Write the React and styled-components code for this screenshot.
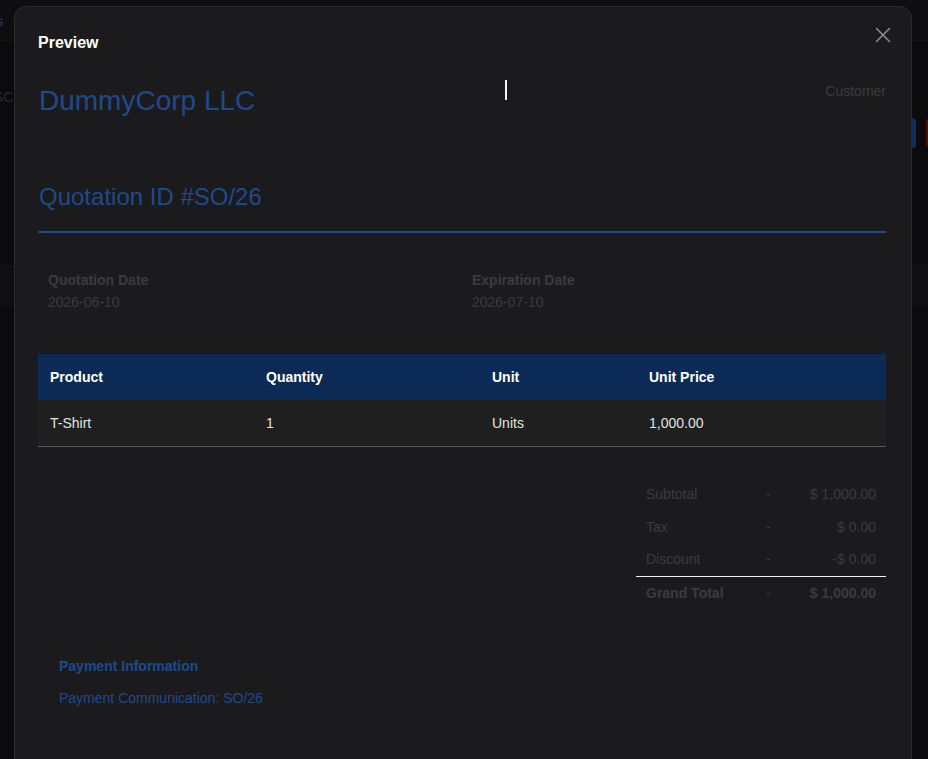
import React from 'react';
import styled, { createGlobalStyle } from 'styled-components';

const GlobalStyle = createGlobalStyle`
  html, body {
    margin: 0;
    padding: 0;
    background: #0b0b0d;
    font-family: "Liberation Sans", Arial, sans-serif;
    overflow: hidden;
  }
`;

const Page = styled.div`
  position: relative;
  width: 100vw;
  height: 100vh;
  background: #0b0b0d;
  overflow: hidden;
`;

// faint page behind the overlay
const BackBar = styled.div`
  height: 40px;
  border-bottom: 1px solid #141416;
  background: #0e0e10;
  display: flex;
  align-items: center;
  color: #1d3f70;
  font-size: 15px;
  margin-left: -4px;
`;

const BackLabel = styled.div`
  color: #2a2a2c;
  font-size: 14px;
  margin: 48px 0 0 -6px;
`;

const BackBand = styled.div`
  margin-top: 160px;
  height: 40px;
  background: #0f0f11;
  border-top: 1px solid #141416;
`;

const BackButtons = styled.div`
  position: absolute;
  top: 118px;
  right: -30px;
  display: flex;
  gap: 10px;
`;

const BackBtn = styled.div`
  width: 32px;
  height: 30px;
  border-radius: 4px;
  background: ${p => p.$red ? '#4a0d0d' : '#0f2e5c'};
`;

const Modal = styled.div`
  position: absolute;
  left: 14px;
  top: 6px;
  width: 898px;
  height: 800px;
  box-sizing: border-box;
  background: #1b1b1d;
  border: 1px solid #2b2b2e;
  border-radius: 12px;
  padding: 25px 25px 0 23px;
`;

const ModalHeader = styled.div`
  display: flex;
  justify-content: space-between;
  align-items: center;
  height: 22px;
`;

const Title = styled.h2`
  margin: 0;
  font-size: 16px;
  font-weight: 700;
  color: #ffffff;
`;

const CloseButton = styled.button`
  background: none;
  border: none;
  padding: 0;
  margin-right: -5px;
  margin-top: -17px;
  width: 16px;
  height: 16px;
  cursor: pointer;
  display: flex;
  svg { display: block; }
`;

const CompanyRow = styled.div`
  display: flex;
  justify-content: space-between;
  align-items: flex-start;
  margin-top: 30px;
`;

const Company = styled.h1`
  margin: 0 0 0 1px;
  font-size: 28px;
  line-height: 34px;
  font-weight: 400;
  color: #1e4a8c;
`;

const Customer = styled.div`
  font-size: 14px;
  color: #3b3b3e;
  margin-top: -1px;
`;

const QuoteTitle = styled.h2`
  margin: 64px 0 0;
  font-size: 24px;
  line-height: 30px;
  font-weight: 400;
  color: #1e4a8c;
  padding: 0 0 19px 1px;
  border-bottom: 2px solid #1e4a8c;
`;

const Dates = styled.div`
  display: grid;
  grid-template-columns: 1fr 1fr;
  margin-top: 38px;
`;

const DateCell = styled.div`
  padding-left: 10px;
`;

const DateLabel = styled.div`
  font-size: 14px;
  font-weight: 700;
  color: #3b3b3e;
  line-height: 18px;
`;

const DateValue = styled.div`
  font-size: 14px;
  color: #3b3b3e;
  line-height: 18px;
  margin-top: 4px;
`;

const Table = styled.table`
  width: 100%;
  table-layout: fixed;
  border-collapse: collapse;
  margin-top: 43px;
  font-size: 14px;
`;

const Th = styled.th`
  background: #0c2a56;
  color: #ffffff;
  font-weight: 700;
  text-align: left;
  height: 46px;
  padding: 0 12px;
  width: ${p => p.$w || 'auto'};
`;

const Td = styled.td`
  background: #1f1f1f;
  color: #e2e2e2;
  height: 46px;
  padding: 0 12px;
  border-bottom: 1px solid #555557;
`;

const Totals = styled.div`
  margin: 31px 0 0 auto;
  width: 250px;
`;

const TotalRow = styled.div`
  display: grid;
  grid-template-columns: 120px 16px 1fr;
  align-items: center;
  padding: 0 10px;
  height: ${p => p.$h || '32.5px'};
  font-size: 14px;
  color: #3b3b3e;
  font-weight: ${p => p.$bold ? 700 : 400};
  border-top: ${p => p.$line ? '1.5px solid #f2f2f2' : 'none'};
`;

const Amount = styled.span`
  text-align: right;
`;

const Payment = styled.div`
  margin-top: 48px;
  padding-left: 21px;
`;

const PaymentTitle = styled.div`
  font-size: 14px;
  font-weight: 700;
  color: #1e4a8c;
`;

const PaymentText = styled.div`
  font-size: 14px;
  color: #1e4a8c;
  margin-top: 16px;
`;

const TextCursor = styled.div`
  position: absolute;
  left: 505px;
  top: 80px;
  width: 2px;
  height: 20px;
  background: #f4f4f4;
`;

const rows = [
  { label: 'Subtotal', value: '$ 1,000.00' },
  { label: 'Tax', value: '$ 0.00' },
  { label: 'Discount', value: '-$ 0.00' },
];

export default function App() {
  return (
    <>
      <GlobalStyle />
      <Page>
        <BackBar>s</BackBar>
        <BackLabel>SC</BackLabel>
        <BackBand />
        <BackButtons>
          <BackBtn />
          <BackBtn $red />
        </BackButtons>

        <Modal>
          <ModalHeader>
            <Title>Preview</Title>
            <CloseButton aria-label="Close">
              <svg width="16" height="16" viewBox="0 0 16 16" fill="none">
                <path d="M1.5 1.5 L14.5 14.5 M14.5 1.5 L1.5 14.5" stroke="#8e8e92" strokeWidth="1.5" strokeLinecap="round" />
              </svg>
            </CloseButton>
          </ModalHeader>

          <CompanyRow>
            <Company>DummyCorp LLC</Company>
            <Customer>Customer</Customer>
          </CompanyRow>

          <QuoteTitle>Quotation ID #SO/26</QuoteTitle>

          <Dates>
            <DateCell>
              <DateLabel>Quotation Date</DateLabel>
              <DateValue>2026-06-10</DateValue>
            </DateCell>
            <DateCell>
              <DateLabel>Expiration Date</DateLabel>
              <DateValue>2026-07-10</DateValue>
            </DateCell>
          </Dates>

          <Table>
            <thead>
              <tr>
                <Th $w="192px">Product</Th>
                <Th $w="202px">Quantity</Th>
                <Th $w="133px">Unit</Th>
                <Th>Unit Price</Th>
              </tr>
            </thead>
            <tbody>
              <tr>
                <Td>T-Shirt</Td>
                <Td>1</Td>
                <Td>Units</Td>
                <Td>1,000.00</Td>
              </tr>
            </tbody>
          </Table>

          <Totals>
            {rows.map(r => (
              <TotalRow key={r.label}>
                <span>{r.label}</span>
                <span>-</span>
                <Amount>{r.value}</Amount>
              </TotalRow>
            ))}
            <TotalRow $bold $line $h="33px">
              <span>Grand Total</span>
              <span style={{ fontWeight: 400 }}>-</span>
              <Amount>$ 1,000.00</Amount>
            </TotalRow>
          </Totals>

          <Payment>
            <PaymentTitle>Payment Information</PaymentTitle>
            <PaymentText>Payment Communication: SO/26</PaymentText>
          </Payment>
        </Modal>

        <TextCursor />
      </Page>
    </>
  );
}
